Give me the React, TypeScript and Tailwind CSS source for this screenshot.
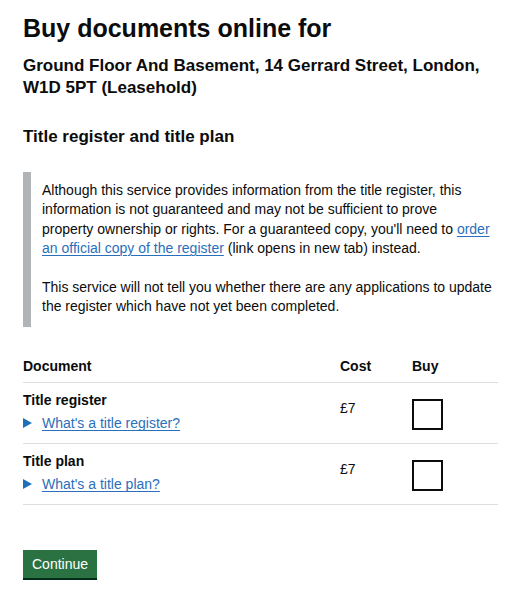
import React from "react";

const Tri = () => (
  <svg width="9" height="10" viewBox="0 0 9 10" className="shrink-0">
    <polygon points="0,0 9,5 0,10" fill="#1d70b8" />
  </svg>
);

const Row = ({ title, link }: { title: string; link: string }) => (
  <div className="grid grid-cols-[317px_72px_1fr] border-b border-[#dcdddd] h-[61px]">
    <div className="pt-[7px]">
      <div className="font-bold text-[14px] leading-[20px]">{title}</div>
      <div className="flex items-center mt-[3px] h-[20px]">
        <Tri />
        <a className="ml-[10px] text-[14px] leading-[20px] text-[#2a6fbb] underline underline-offset-[2px] decoration-1">
          {link}
        </a>
      </div>
    </div>
    <div className="pt-[15px] text-[14px] leading-[20px]">£7</div>
    <div className="pt-[16px]">
      <div className="w-[31px] h-[31px] border-2 border-[#0b0c0c] bg-white" />
    </div>
  </div>
);

export default function App() {
  return (
    <div
      className="bg-white min-h-[600px] pl-[23px] pr-[16px] text-[#0b0c0c]"
      style={{ fontFamily: '"Liberation Sans", Arial, sans-serif' }}
    >
      <h1 className="pt-[13px] text-[25px] leading-[30px] font-bold">Buy documents online for</h1>
      <h2 className="mt-[12px] text-[17px] leading-[22px] font-bold">
        Ground Floor And Basement, 14 Gerrard Street, London, W1D 5PT (Leasehold)
      </h2>
      <h3 className="mt-[27px] text-[17px] leading-[22px] font-bold">Title register and title plan</h3>
      <div className="mt-[24px] border-l-[8px] border-[#b1b4b6] pl-[11px] pt-[9px] pb-[11px] text-[14px] leading-[19.4px]">
        <p className="mb-[19px]">
          Although this service provides information from the title register, this
          <br />
          information is not guaranteed and may not be sufficient to prove
          <br />
          property ownership or rights. For a guaranteed copy, you'll need to{" "}
          <a className="text-[#2a6fbb] underline underline-offset-[2px] decoration-1">
            order
            <br />
            an official copy of the register
          </a>{" "}
          (link opens in new tab) instead.
        </p>
        <p>
          This service will not tell you whether there are any applications to update
          <br />
          the register which have not yet been completed.
        </p>
      </div>
      <div className="mt-[29px]">
        <div className="grid grid-cols-[317px_72px_1fr] border-b border-[#dcdddd] pb-[6px] font-bold text-[14px] leading-[20px]">
          <div>Document</div>
          <div>Cost</div>
          <div>Buy</div>
        </div>
        <Row title="Title register" link="What's a title register?" />
        <Row title="Title plan" link="What's a title plan?" />
      </div>
      <button className="mt-[45px] bg-[#2b7243] text-white text-[14px] leading-[20px] px-[9px] py-[4px] shadow-[0_2px_0_#002d18]">
        Continue
      </button>
    </div>
  );
}
